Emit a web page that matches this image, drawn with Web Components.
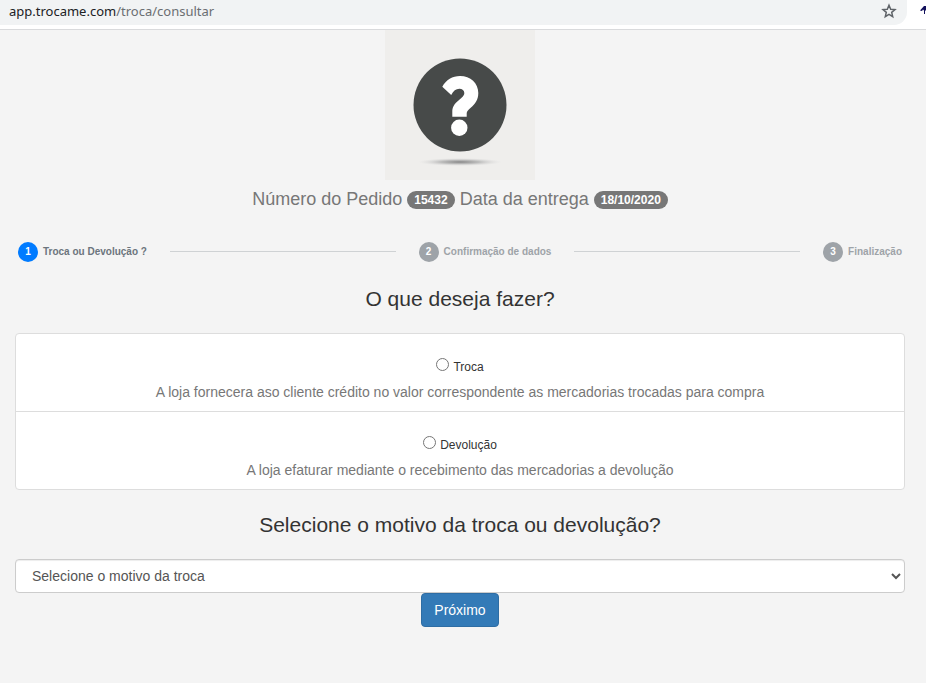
<!DOCTYPE html>
<html lang="pt-BR">
<head>
<meta charset="utf-8">
<meta name="viewport" content="width=device-width, initial-scale=1">
<title>Troca.me</title>
<style>
  body {
    margin: 0;
    min-height: 100vh;
    background: #f4f4f4;
    color: #333;
    font: 14px/20px "Liberation Sans", Arial, sans-serif;
  }
</style>
</head>
<body>
<exchange-page></exchange-page>

<script>
class BaseElement extends HTMLElement {
  constructor() {
    super()
    this.attachShadow({ mode: 'open' })
  }

  connectedCallback() {
    if (!this.shadowRoot.hasChildNodes()) {
      this.shadowRoot.appendChild(this.constructor.template.content.cloneNode(true))
    }
  }
}

function template(html) {
  const element = document.createElement('template')
  element.innerHTML = html
  return element
}

class AddressBar extends BaseElement {
  static template = template(`
    <style>
      :host {
        display: flex;
        height: 29px;
        overflow: hidden;
        background: #fff;
        border-bottom: 1px solid #d9dadc;
      }

      #field {
        flex: 1;
        display: flex;
        align-items: center;
        justify-content: space-between;
        height: 25px;
        padding: 0 10px 4px 9px;
        box-sizing: border-box;
        background: #f1f3f4;
        border-radius: 0 0 13px 0;
      }

      #url {
        font: 13px/20px "Noto Sans", sans-serif;
        color: #202124;
      }

      #url span { color: #6b6e72; }

      button {
        display: flex;
        padding: 0;
        border: 0;
        background: none;
      }

      #extension {
        width: 19px;
        display: flex;
        justify-content: flex-end;
      }
    </style>
    <div id="field">
      <div id="url">app.trocame.com<span>/troca/consultar</span></div>
      <button aria-label="Favoritar">
        <svg width="16" height="16" viewBox="0 0 16 16" fill="none" stroke="#5f6368" stroke-width="1.5">
          <path d="M8 2.200l1.700 4 4.300.4-3.300 2.800 1 4.300L8 11.400l-3.700 2.300 1-4.300L2 6.600l4.300-.4z"/>
        </svg>
      </button>
    </div>
    <div id="extension">
      <svg width="6" height="16" viewBox="0 0 6 16" fill="#12105c">
        <path d="M0 10.500L4 6h2v4.500H5V14H4v-3.500L3 9.500 2 11z"/>
      </svg>
    </div>
  `)
}

class StoreLogo extends BaseElement {
  static template = template(`
    <style>
      :host { display: block; }
      svg { display: block; margin: 0 auto; }
    </style>
    <svg width="150" height="150" viewBox="0 0 150 150">
      <defs>
        <radialGradient id="shadow">
          <stop offset="0" stop-color="#858585"/>
          <stop offset=".45" stop-color="#b0b0b0" stop-opacity=".8"/>
          <stop offset="1" stop-color="#ddd" stop-opacity="0"/>
        </radialGradient>
      </defs>
      <rect width="150" height="150" fill="#efeeec"/>
      <ellipse cx="75" cy="132" rx="42" ry="4" fill="url(#shadow)"/>
      <circle cx="75" cy="75" r="46.5" fill="#474a49"/>
      <g fill="#fff">
        <path d="M57.300 56.700C61 50 67.500 46 75 46c10.500 0 18.300 7 18.300 17 0 7-3.300 11-7.300 14.500-3 2.600-4.300 3.800-4.300 6v3.200H67.300V81.500c0-4.500 2-7.500 6.200-11 4-3.300 5.800-5 5.800-7.500 0-2.500-2-4.200-5-4.200-3.500 0-5.800 2-8.100 6.200z"/>
        <circle cx="74.300" cy="97.700" r="8.200"/>
      </g>
    </svg>
  `)
}

class PillBadge extends BaseElement {
  static template = template(`
    <style>
      :host {
        display: inline-block;
        padding: 3px 7px;
        border-radius: 10px;
        background: #777;
        color: #fff;
        font-size: 12px;
        font-weight: bold;
        line-height: 12px;
        vertical-align: middle;
      }
    </style>
    <slot></slot>
  `)
}

class StepItem extends BaseElement {
  static template = template(`
    <style>
      :host {
        display: flex;
        align-items: center;
        gap: 5px;
        color: #9ea3a8;
        font-size: 10px;
        font-weight: bold;
        white-space: nowrap;
      }

      :host([active]) { color: #6c757d; }

      #circle {
        width: 20px;
        border-radius: 50%;
        background: #9ea3a8;
        color: #fff;
        line-height: 20px;
        text-align: center;
      }

      :host([active]) #circle { background: #007bff; }
    </style>
    <span id="circle"></span>
    <slot></slot>
  `)

  connectedCallback() {
    super.connectedCallback()
    this.shadowRoot.getElementById('circle').textContent = this.getAttribute('number')
  }
}

class StepList extends BaseElement {
  static template = template(`
    <style>
      :host {
        display: flex;
        align-items: center;
        gap: 23px;
        padding: 0 3px;
      }

      .line {
        flex: 1;
        height: 1px;
        margin-bottom: 1px;
        background: #cfd2d4;
      }
    </style>
    <step-item number="1" active>Troca ou Devolução ?</step-item>
    <div class="line"></div>
    <step-item number="2">Confirmação de dados</step-item>
    <div class="line"></div>
    <step-item number="3">Finalização</step-item>
  `)
}

class ChoiceList extends BaseElement {
  static template = template(`
    <style>
      :host {
        display: block;
        background: #fff;
        border: 1px solid #ddd;
        border-radius: 4px;
      }

      .row {
        padding: 23px 15px 9px;
        text-align: center;
      }

      .row + .row { border-top: 1px solid #ddd; }

      label {
        display: flex;
        justify-content: center;
        align-items: flex-start;
        gap: 4px;
        font-size: 12px;
      }

      input { margin: 1px 0 0; }

      p {
        margin: 5px 0 0;
        color: #777;
      }
    </style>
    <div class="row">
      <label><input type="radio" name="tipo" value="troca">Troca</label>
      <p>A loja fornecera aso cliente crédito no valor correspondente as mercadorias trocadas para compra</p>
    </div>
    <div class="row">
      <label><input type="radio" name="tipo" value="devolucao">Devolução</label>
      <p>A loja efaturar mediante o recebimento das mercadorias a devolução</p>
    </div>
  `)
}

class ReasonForm extends BaseElement {
  static template = template(`
    <style>
      :host { display: block; text-align: center; }

      h2 {
        margin: 0 0 22px;
        font-size: 21px;
        font-weight: normal;
        line-height: 24px;
      }

      select {
        display: block;
        width: 100%;
        height: 34px;
        padding: 6px 1px 6px 12px;
        border: 1px solid #ccc;
        border-radius: 4px;
        background: #fff;
        box-shadow: inset 0 1px 1px rgba(0, 0, 0, .075);
        color: #555;
        font: inherit;
      }

      button {
        padding: 6px 12px;
        border: 1px solid #2e6da4;
        border-radius: 4px;
        background: #337ab7;
        color: #fff;
        font: inherit;
      }
    </style>
    <h2><label for="reason">Selecione o motivo da troca ou devolução?</label></h2>
    <select id="reason">
      <option>Selecione o motivo da troca</option>
    </select>
    <button type="button">Próximo</button>
  `)
}

class ExchangePage extends BaseElement {
  static template = template(`
    <style>
      :host { display: block; }

      main { padding: 0 21px 0 15px; }

      #order {
        margin: 9px 0 33px;
        color: #777;
        font-size: 18px;
        font-weight: normal;
        line-height: 20px;
        text-align: center;
      }

      h2 {
        margin: 25px 0 22px;
        font-size: 21px;
        font-weight: normal;
        line-height: 24px;
        text-align: center;
      }

      reason-form { margin-top: 23px; }
    </style>
    <address-bar></address-bar>
    <main>
      <store-logo></store-logo>
      <h1 id="order">Número do Pedido <pill-badge>15432</pill-badge> Data da entrega <pill-badge>18/10/2020</pill-badge></h1>
      <step-list></step-list>
      <h2>O que deseja fazer?</h2>
      <choice-list></choice-list>
      <reason-form></reason-form>
    </main>
  `)
}

customElements.define('address-bar', AddressBar)
customElements.define('store-logo', StoreLogo)
customElements.define('pill-badge', PillBadge)
customElements.define('step-item', StepItem)
customElements.define('step-list', StepList)
customElements.define('choice-list', ChoiceList)
customElements.define('reason-form', ReasonForm)
customElements.define('exchange-page', ExchangePage)
</script>
</body>
</html>
